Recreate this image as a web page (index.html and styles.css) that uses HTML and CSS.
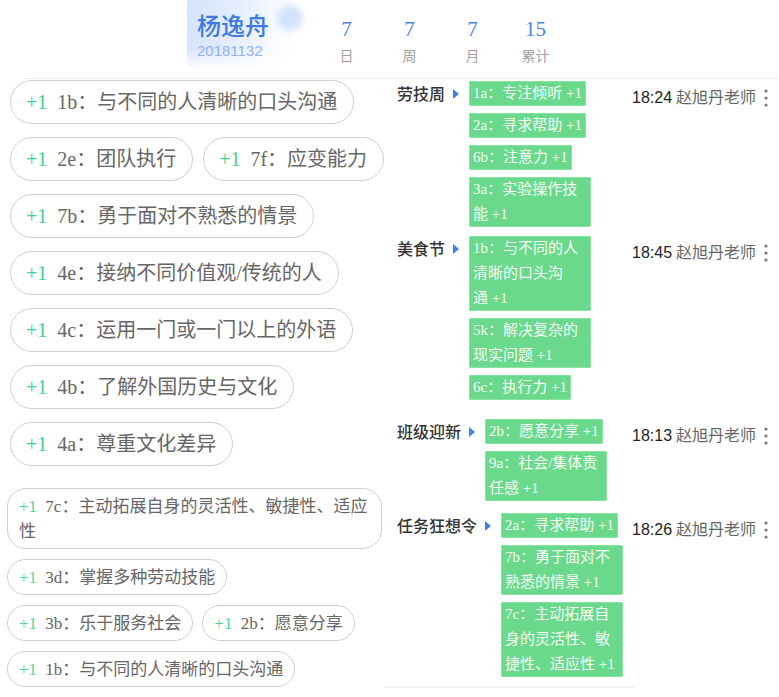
FILE: index.html
```html
<!DOCTYPE html>
<html lang="zh-CN">
<head>
    <meta charset="UTF-8">
    <meta name="viewport" content="width=device-width, initial-scale=1.0">
    <title>杨逸舟 - 成长记录</title>
    <link rel="stylesheet" href="styles.css">
</head>
<body>
    <div class="page">
        <header class="profile">
            <div class="name-card">
                <div class="name">杨逸舟</div>
                <div class="student-id">20181132</div>
            </div>
            <div class="stats">
                <div class="stat"><div class="stat-num">7</div><div class="stat-label">日</div></div>
                <div class="stat"><div class="stat-num">7</div><div class="stat-label">周</div></div>
                <div class="stat"><div class="stat-num">7</div><div class="stat-label">月</div></div>
                <div class="stat"><div class="stat-num">15</div><div class="stat-label">累计</div></div>
            </div>
        </header>
        <div class="profile-line"></div>

        <div class="main">
            <!-- 左侧：能力标签 -->
            <div class="left">
                <div class="pills pills-big">
                    <span class="pill"><span class="plus">+1</span> 1b：与不同的人清晰的口头沟通</span>
                    <span class="pill"><span class="plus">+1</span> 2e：团队执行</span>
                    <span class="pill"><span class="plus">+1</span> 7f：应变能力</span>
                    <span class="pill"><span class="plus">+1</span> 7b：勇于面对不熟悉的情景</span>
                    <span class="pill"><span class="plus">+1</span> 4e：接纳不同价值观/传统的人</span>
                    <span class="pill"><span class="plus">+1</span> 4c：运用一门或一门以上的外语</span>
                    <span class="pill"><span class="plus">+1</span> 4b：了解外国历史与文化</span>
                    <span class="pill"><span class="plus">+1</span> 4a：尊重文化差异</span>
                </div>

                <div class="pills pills-small">
                    <span class="pill"><span class="plus">+1</span> 7c：主动拓展自身的灵活性、敏捷性、适应性</span>
                    <span class="pill"><span class="plus">+1</span> 3d：掌握多种劳动技能</span>
                    <span class="pill"><span class="plus">+1</span> 3b：乐于服务社会</span>
                    <span class="pill"><span class="plus">+1</span> 2b：愿意分享</span>
                    <span class="pill"><span class="plus">+1</span> 1b：与不同的人清晰的口头沟通</span>
                </div>
            </div>

            <!-- 右侧：活动记录 -->
            <div class="right">
                <div class="row">
                    <div class="row-main">
                        <span class="event">劳技周</span>
                        <svg class="arrow" width="6" height="10" viewBox="0 0 6 10"><path d="M0 0 L6 5 L0 10 Z" fill="#3f7ff0"/></svg>
                        <div class="tags">
                            <span class="tag">1a：专注倾听&nbsp;+1</span>
                            <span class="tag">2a：寻求帮助&nbsp;+1</span>
                            <span class="tag">6b：注意力&nbsp;+1</span>
                            <span class="tag">3a：实验操作技能&nbsp;+1</span>
                        </div>
                    </div>
                    <div class="meta">
                        <span class="time">18:24</span>
                        <span class="teacher">赵旭丹老师</span>
                        <svg class="more" width="4" height="20" viewBox="0 0 4 20"><circle cx="2" cy="3" r="1.6"/><circle cx="2" cy="10" r="1.6"/><circle cx="2" cy="17" r="1.6"/></svg>
                    </div>
                </div>

                <div class="row">
                    <div class="row-main">
                        <span class="event">美食节</span>
                        <svg class="arrow" width="6" height="10" viewBox="0 0 6 10"><path d="M0 0 L6 5 L0 10 Z" fill="#3f7ff0"/></svg>
                        <div class="tags">
                            <span class="tag">1b：与不同的人清晰的口头沟通&nbsp;+1</span>
                            <span class="tag">5k：解决复杂的现实问题&nbsp;+1</span>
                            <span class="tag">6c：执行力&nbsp;+1</span>
                        </div>
                    </div>
                    <div class="meta">
                        <span class="time">18:45</span>
                        <span class="teacher">赵旭丹老师</span>
                        <svg class="more" width="4" height="20" viewBox="0 0 4 20"><circle cx="2" cy="3" r="1.6"/><circle cx="2" cy="10" r="1.6"/><circle cx="2" cy="17" r="1.6"/></svg>
                    </div>
                </div>

                <div class="row row-far">
                    <div class="row-main">
                        <span class="event">班级迎新</span>
                        <svg class="arrow" width="6" height="10" viewBox="0 0 6 10"><path d="M0 0 L6 5 L0 10 Z" fill="#3f7ff0"/></svg>
                        <div class="tags">
                            <span class="tag">2b：愿意分享&nbsp;+1</span>
                            <span class="tag">9a：社会/集体责任感&nbsp;+1</span>
                        </div>
                    </div>
                    <div class="meta">
                        <span class="time">18:13</span>
                        <span class="teacher">赵旭丹老师</span>
                        <svg class="more" width="4" height="20" viewBox="0 0 4 20"><circle cx="2" cy="3" r="1.6"/><circle cx="2" cy="10" r="1.6"/><circle cx="2" cy="17" r="1.6"/></svg>
                    </div>
                </div>

                <div class="row row-near">
                    <div class="row-main">
                        <span class="event">任务狂想令</span>
                        <svg class="arrow" width="6" height="10" viewBox="0 0 6 10"><path d="M0 0 L6 5 L0 10 Z" fill="#3f7ff0"/></svg>
                        <div class="tags">
                            <span class="tag">2a：寻求帮助&nbsp;+1</span>
                            <span class="tag">7b：勇于面对不熟悉的情景&nbsp;+1</span>
                            <span class="tag">7c：主动拓展自身的灵活性、敏捷性、适应性&nbsp;+1</span>
                        </div>
                    </div>
                    <div class="meta">
                        <span class="time">18:26</span>
                        <span class="teacher">赵旭丹老师</span>
                        <svg class="more" width="4" height="20" viewBox="0 0 4 20"><circle cx="2" cy="3" r="1.6"/><circle cx="2" cy="10" r="1.6"/><circle cx="2" cy="17" r="1.6"/></svg>
                    </div>
                </div>
                <div class="row-line"></div>
            </div>
        </div>
    </div>
</body>
</html>
```
FILE: styles.css
```css
body {
    margin: 0;
    padding: 0;
    background-color: #fff;
    font-family: "Noto Sans CJK SC", sans-serif;
}

.page {
    width: 779px;
    height: 697px;
    overflow: hidden;
}

/* 顶部：姓名和统计 */
.profile {
    display: flex;
    height: 78px;
    padding-left: 187px;
}

.name-card {
    width: 93px;
    height: 60px;
    padding: 10px 0 0 10px;
    background:
        linear-gradient(180deg, rgba(255, 255, 255, 0) 70%, #fff 100%),
        linear-gradient(100deg, #d4e2fb 0%, #e4edfd 45%, #f7faff 80%, rgba(255, 255, 255, 0) 100%);
    position: relative;
}

/* 右上角的模糊圆点 */
.name-card::after {
    content: "";
    position: absolute;
    left: 90px;
    top: 5px;
    width: 26px;
    height: 26px;
    border-radius: 50%;
    background-color: #d3e2fb;
    filter: blur(3px);
}

.name {
    font-size: 24px;
    line-height: 30px;
    font-weight: 500;
    color: #3f79e2;
    position: relative;
    z-index: 1;
}

.student-id {
    margin-top: 2px;
    font-family: "Liberation Sans", sans-serif;
    font-size: 15px;
    line-height: 18px;
    color: #8fb1f1;
}

.stats {
    display: flex;
    margin-left: 25px;
    padding-top: 17px;
}

.stat {
    width: 63px;
    text-align: center;
}

.stat-num {
    font-family: "Liberation Serif", serif;
    font-size: 21px;
    line-height: 24px;
    color: #4b82e6;
}

.stat-label {
    margin-top: 5px;
    font-size: 14px;
    line-height: 18px;
    color: #a0a0a0;
}

.profile-line {
    height: 1px;
    margin-left: 25px;
    background-color: #ececec;
}

.main {
    display: grid;
    grid-template-columns: 385px 1fr;
}

/* 左侧标签 */
.pills {
    display: flex;
    flex-wrap: wrap;
    align-items: flex-start;
    font-family: "Liberation Serif", "Noto Sans CJK SC", serif;
    color: #666;
}

.pill {
    display: inline-block;
    border: 1px solid #cfcfcf;
    background-color: #fff;
}

.plus {
    color: #3fcf8f;
    margin-right: 5px;
}

.pills-big {
    padding: 1px 0 0 10px;
    gap: 13px 10px;
    font-size: 20px;
}

.pills-big .pill {
    padding: 9px 16px 9px 15px;
    line-height: 24px;
    border-radius: 22px;
}

.pills-small {
    width: 375px;
    margin-top: 22px;
    padding-left: 7px;
    gap: 10px 9px;
    font-size: 17px;
}

.pills-small .pill {
    max-width: 100%;
    box-sizing: border-box;
    padding: 5px 11px 4px;
    line-height: 25px;
    border-radius: 19px;
}

.pills-small .plus {
    color: #4fd6a0;
    margin-right: 4px;
}

/* 右侧活动记录 */
.right {
    display: flex;
    flex-direction: column;
    gap: 9px;
    padding-top: 2px;
}

.row {
    display: flex;
    align-items: flex-start;
    padding-left: 12px;
}

.row-far {
    margin-top: 10px;
}

.row-near {
    margin-top: 3px;
}

.row-main {
    display: flex;
    align-items: flex-start;
    width: 235px;
}

.event {
    font-size: 16px;
    line-height: 25px;
    font-weight: 500;
    color: #333;
}

.arrow {
    margin: 8px 10px 0 8px;
}

.tags {
    display: flex;
    flex-direction: column;
    align-items: flex-start;
    gap: 7px;
}

.tag {
    max-width: 114px;
    padding: 0 4px;
    font-family: "Liberation Serif", "Noto Sans CJK SC", serif;
    font-size: 15px;
    line-height: 25px;
    color: #f4fff7;
    background-color: #6bd98c;
    border-radius: 2px;
    box-shadow: inset 0 0 0 1px #86e3a1;
}

.meta {
    display: flex;
    align-items: center;
    padding-top: 4px;
    font-family: "Liberation Sans", "Noto Sans CJK SC", sans-serif;
    font-size: 16px;
    line-height: 25px;
}

.time {
    color: #222;
    margin-right: 4px;
}

.teacher {
    color: #666;
}

.more {
    margin-left: 8px;
    fill: #777;
}

.row-line {
    height: 2px;
    width: 250px;
    background-color: #f3f3f3;
}
```
